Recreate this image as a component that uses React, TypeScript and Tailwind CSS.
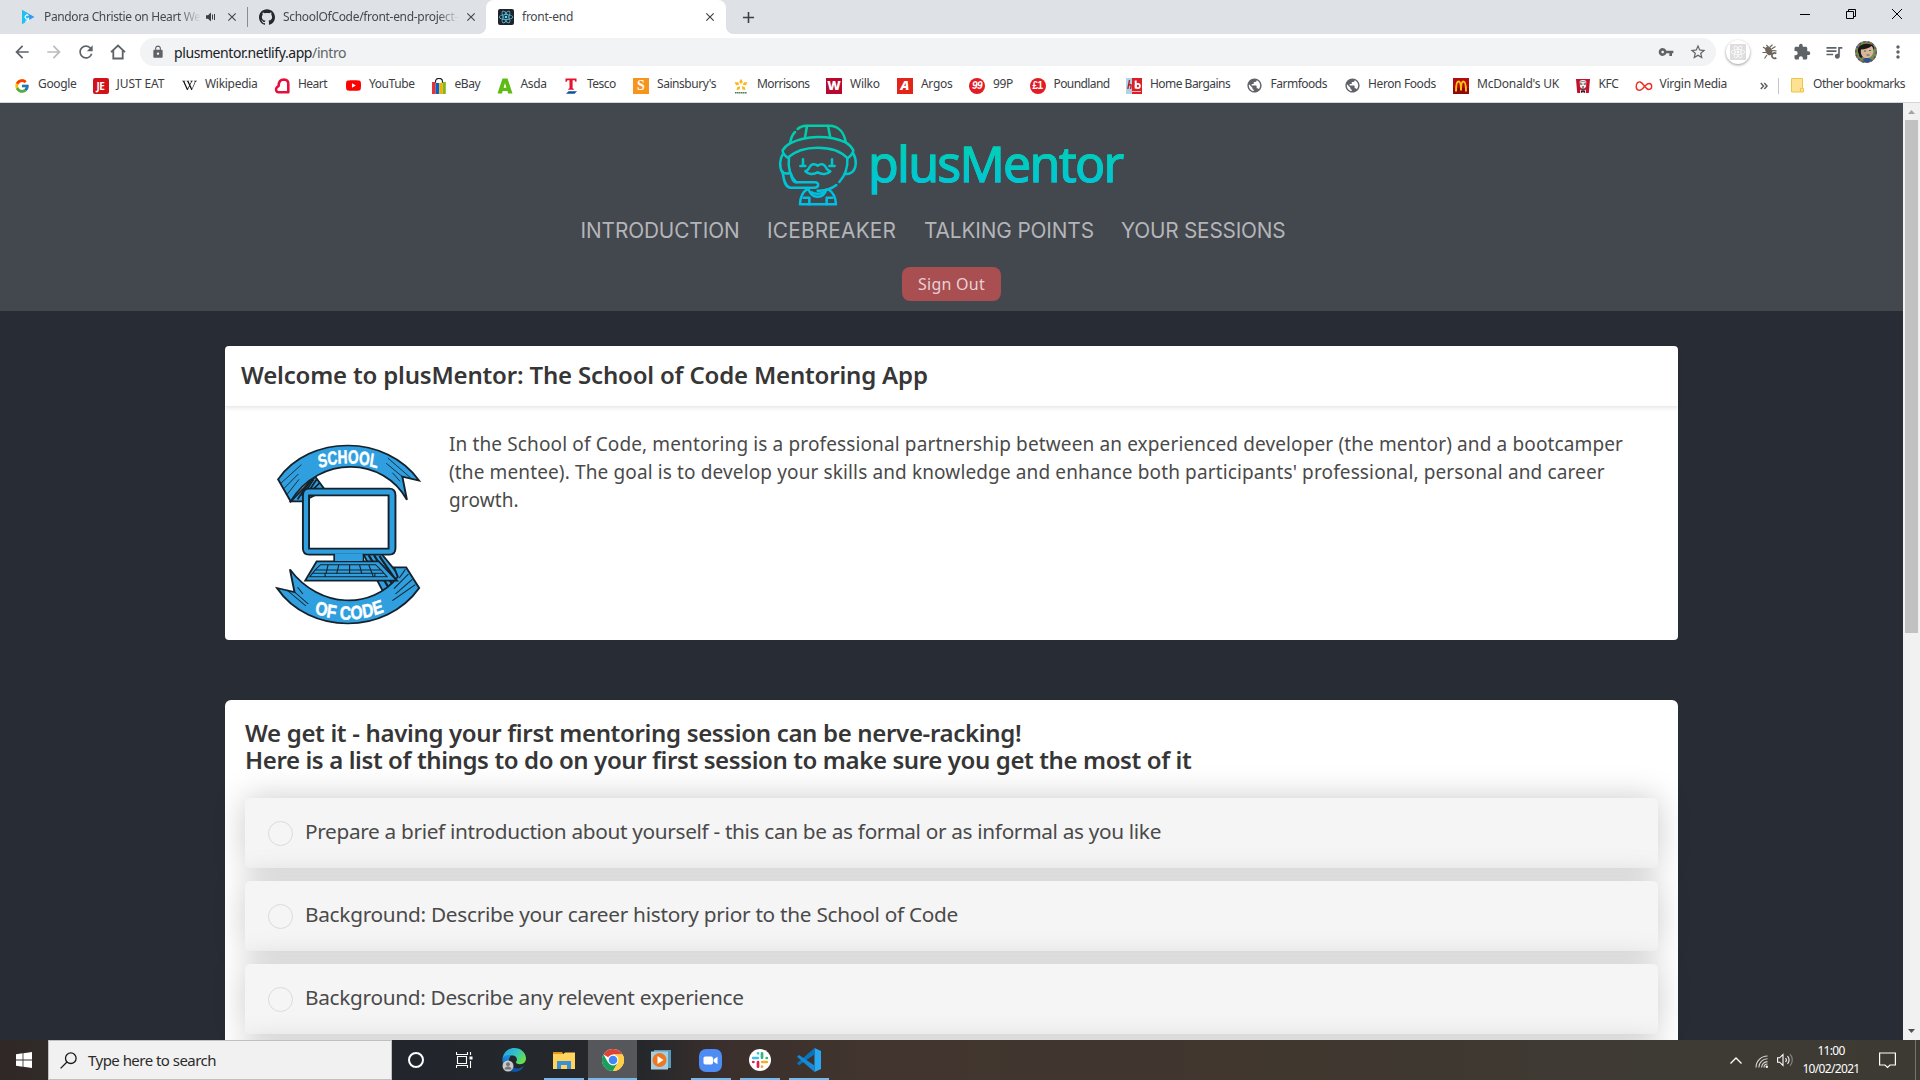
import React from 'react';
import type { ReactNode } from 'react';
import {
  MdArrowBack, MdArrowForward, MdRefresh, MdLock, MdVpnKey, MdStarBorder, MdExtension, MdQueueMusic,
  MdMoreVert, MdPublic, MdClose, MdAdd,
} from 'react-icons/md';
import { FcGoogle } from 'react-icons/fc';
import { SiGithub, SiWikipedia, SiYoutube, SiReact } from 'react-icons/si';

/* ---------- Bookmark icons ---------- */

function Tile({ className, children }: { className: string; children: ReactNode }) {
  return <span className={`flex h-4 w-4 items-center justify-center overflow-hidden leading-none ${className}`}>{children}</span>;
}

const HeartIcon = () => (
  <svg width="16" height="16" viewBox="0 0 16 16" fill="none" stroke="#e4103a" strokeWidth="2.6" strokeLinejoin="round">
    <path d="M14.300 14.300H4.600A2.900 2.900 0 0 1 3 9.200L4.600 8C4.600 4 6.800 1.600 10 1.500c2.800 0 4.500 1.800 4.300 4.600V14.300Z" />
  </svg>
);
const EbayIcon = () => (
  <svg width="16" height="16" viewBox="0 0 16 16">
    <path d="M4.500 5V3.500a3.300 3 0 0 1 7 0V5" fill="none" stroke="#222" strokeWidth="1.200" />
    <rect x="1" y="4" width="3.600" height="12" fill="#e53238" />
    <rect x="4.600" y="5" width="3.600" height="11" fill="#0064d2" />
    <rect x="8.200" y="5" width="3.400" height="11" fill="#f5af02" />
    <rect x="11.600" y="4" width="3.200" height="12" fill="#86b817" />
  </svg>
);
const AsdaIcon = () => (
  <svg width="16" height="16" viewBox="0 0 16 16">
    <path d="M5.500.5h5L15.500 15.500h-4.300l-.8-2.600H5.700l-.8 2.600H.5L5.500.5Zm2.500 4.500L6.600 9.800h2.800L8 5Z" fill="#5dbb14" fillRule="evenodd" />
  </svg>
);
const TescoIcon = () => (
  <svg width="16" height="16" viewBox="0 0 16 16">
    <path d="M2.500.5h11v3.200h-1.200l-.6-1.400H9.600v8l1.300.8v.7H5.200v-.7l1.300-.8v-8H4.400l-.6 1.400H2.500V.5Z" fill="#e8112d" />
    <path d="M5.500 13.300h8.500l-2.500 2.500H3l2.500-2.500Z" fill="#0a50a1" />
  </svg>
);
const MorrisonsIcon = () => (
  <svg width="16" height="16" viewBox="0 0 16 16">
    <g fill="#fbb61a">
      <path d="m8 .8 1.800 3L8 6.200 6.200 3.800Z" />
      <path d="m14.400 4.200-1.400 3-3.200-.4 1-2.600Z" />
      <path d="m1.600 4.200 1.400 3 3.200-.4-1-2.600Z" />
      <path d="m12.500 12-3-.6-.8-3.200 3 .8Z" />
      <path d="m3.500 12 3-.6.8-3.200-3 .8Z" />
    </g>
    <path d="M2 14.700h12" stroke="#4e7c5c" strokeWidth="1.500" strokeDasharray="1.500 .4" />
  </svg>
);
const McDonaldsIcon = () => (
  <svg width="16" height="16" viewBox="0 0 16 16">
    <rect width="16" height="16" fill="#b30c10" />
    <rect y="10" width="16" height="6" fill="#8f080c" />
    <path d="M3 13.500C3 7 4 3.500 5.600 3.500S8 7 8 12.500C8 7 8.800 3.500 10.400 3.500S13 7 13 13.500" fill="none" stroke="#ffc20e" strokeWidth="1.900" />
  </svg>
);
const KfcIcon = () => (
  <svg width="16" height="16" viewBox="0 0 16 16">
    <path d="M1 1h14l-1.200 14H2.200Z" fill="#c3112d" />
    <path d="M4.700 3.500C5 1.500 11 1.500 11.300 3.500L11 9 8 11.500 5 9Z" fill="#f4eeee" />
    <path d="M5 6h2.300M8.700 6H11M7 9h2M8 10v3" stroke="#222" strokeWidth="1" />
    <path d="M4.800 4.600C5.500 3 10.500 3 11.200 4.600" stroke="#777" strokeWidth=".8" fill="none" />
    <path d="M5 11.500 8 13l3-1.500V15H5Z" fill="#e6dede" />
    <path d="m6 12.500 2 .7 2-.7V15l-2-1-2 1Z" fill="#1b1b1b" />
  </svg>
);
const VirginIcon = () => (
  <svg width="18" height="16" viewBox="0 0 18 16" className="-mx-px shrink-0" fill="none" stroke="#ee2e24" strokeWidth="1.400">
    <path d="M9.500 8.500C7.500 11 6 12.600 4.300 12.300 2 12 1 10 1.300 7.500 1.600 5 3.200 3.500 5.200 4c2 .6 3.200 2.600 5 5 1.300 1.800 2.500 2.600 4 2.400 1.500-.2 2.500-1.300 2.500-3 0-1.600-1-2.800-2.500-2.900-1.800-.1-3 1.400-4.700 3Z" />
  </svg>
);
const HomeBargainsIcon = () => (
  <svg width="16" height="16" viewBox="0 0 16 16">
    <rect width="6" height="16" fill="#a9d8ee" />
    <rect x="6" width="10" height="16" fill="#dc1f26" />
    <path d="M3.500 2 1.800 11M2.500 8c1-2 3-2 2.600 0L4.500 11" fill="none" stroke="#c01d2b" strokeWidth="1.400" />
    <path d="M9.700 2.500V10.500" stroke="#fff" strokeWidth="2" />
    <circle cx="11.800" cy="8" r="2.100" fill="none" stroke="#fff" strokeWidth="1.800" />
    <path d="M1 13.500h14" stroke="#f0b4b6" strokeWidth="1" />
  </svg>
);

type Bookmark = { label: string; box: string; track: string; icon: ReactNode };
const bookmarks: Bookmark[] = [
  { label: 'Google', box: 'w-[78.5px]', track: 'tracking-[-0.33px]', icon: <FcGoogle size={16} /> },
  { label: 'JUST EAT', box: 'w-[88.5px]', track: 'tracking-[-0.08px]', icon: <Tile className="rounded-[2px] bg-[#d21118] font-['Open_Sans'] text-[10px] font-bold tracking-[-0.5px] text-white">JE</Tile> },
  { label: 'Wikipedia', box: 'w-[93px]', track: 'tracking-[-0.29px]', icon: <SiWikipedia size={15} color="#111" /> },
  { label: 'Heart', box: 'w-[71px]', track: 'tracking-[-0.53px]', icon: <HeartIcon /> },
  { label: 'YouTube', box: 'w-[85.5px]', track: 'tracking-[-0.43px]', icon: <SiYoutube size={15} color="#f00" /> },
  { label: 'eBay', box: 'w-[66px]', track: 'tracking-[-0.4px]', icon: <EbayIcon /> },
  { label: 'Asda', box: 'w-[66.5px]', track: 'tracking-[-0.35px]', icon: <AsdaIcon /> },
  { label: 'Tesco', box: 'w-[70px]', track: 'tracking-[-0.5px]', icon: <TescoIcon /> },
  { label: "Sainsbury's", box: 'w-[100px]', track: 'tracking-[-0.46px]', icon: <Tile className="bg-[#f7941d] font-['Liberation_Serif'] text-[14px] font-bold text-white">S</Tile> },
  { label: 'Morrisons', box: 'w-[93px]', track: 'tracking-[-0.53px]', icon: <MorrisonsIcon /> },
  { label: 'Wilko', box: 'w-[71px]', track: 'tracking-[-0.25px]', icon: <Tile className="bg-[#b9072f] font-['Open_Sans'] text-[13px] font-extrabold text-white">W</Tile> },
  { label: 'Argos', box: 'w-[72px]', track: 'tracking-[-0.3px]', icon: <Tile className="bg-[#e1251b] font-['Open_Sans'] text-[13px] font-extrabold text-white italic">A</Tile> },
  { label: '99P', box: 'w-[60.5px]', track: 'tracking-[-0.35px]', icon: <Tile className="rounded-full bg-[#e31b23] font-['Liberation_Sans'] text-[10px] font-bold tracking-[-0.5px] text-white italic">99</Tile> },
  { label: 'Poundland', box: 'w-[96.5px]', track: 'tracking-[-0.59px]', icon: <Tile className="rounded-full bg-[#e31b23] font-['Liberation_Sans'] text-[10px] font-bold tracking-[-0.5px] text-white">£1</Tile> },
  { label: 'Home Bargains', box: 'w-[120.5px]', track: 'tracking-[-0.53px]', icon: <HomeBargainsIcon /> },
  { label: 'Farmfoods', box: 'w-[97.5px]', track: 'tracking-[-0.5px]', icon: <MdPublic size={17} color="#5f6368" className="shrink-0" /> },
  { label: 'Heron Foods', box: 'w-[109px]', track: 'tracking-[-0.38px]', icon: <MdPublic size={17} color="#5f6368" className="shrink-0" /> },
  { label: "McDonald's UK", box: 'w-[121.5px]', track: 'tracking-[-0.21px]', icon: <McDonaldsIcon /> },
  { label: 'KFC', box: 'w-[61px]', track: 'tracking-[-0.5px]', icon: <KfcIcon /> },
  { label: 'Virgin Media', box: 'w-[124.5px]', track: 'tracking-[-0.29px]', icon: <VirginIcon /> },
];

/* ---------- Browser chrome ---------- */

function TabBar() {
  return (
    <div className="flex h-[34px] items-center bg-[#dee1e6] text-[12px] text-[#45494d]">
      <div className="flex w-[247px] items-center pl-[21px]">
        <svg width="14" height="14" viewBox="0 0 14 14">
          <path d="M1 0 13.500 7 1 14Z" fill="#2f9cf4" />
          <path d="M1 0 7 3.500V10.500L1 14Z" fill="#1fc0f5" />
          <path d="M7.500 5.500a2 2 0 1 0 0 3v1.500a2 2 0 0 1-3 .8" stroke="#fff" strokeWidth="1.200" fill="none" />
        </svg>
        <span className="ml-[9px] w-[160px] tracking-[-0.37px] whitespace-nowrap [mask-image:linear-gradient(90deg,#000_84%,transparent_98%)]">Pandora Christie on Heart We</span>
        <svg width="11" height="10" viewBox="0 0 11 10" className="ml-[2px]">
          <path d="M0 3.200h2L5 .5v9L2 6.800H0Z" fill="#3c4043" />
          <path d="M6.500 2.500v5M8.500 2v6" stroke="#3c4043" strokeWidth="1" />
        </svg>
        <MdClose size={14} color="#45494d" className="ml-[8px]" />
      </div>
      <div className="h-5 w-px bg-[#8a8d91]" />
      <div className="flex w-[238px] items-center pl-[11px]">
        <SiGithub size={16} color="#24292e" />
        <span className="ml-2 w-[176px] tracking-[-0.31px] whitespace-nowrap [mask-image:linear-gradient(90deg,#000_88%,transparent)]">SchoolOfCode/front-end-project-</span>
        <MdClose size={14} color="#45494d" className="ml-[5px]" />
      </div>
      <div className="relative flex h-[34px] w-[240px] items-center rounded-t-lg bg-white pl-[12px]">
        <span className="absolute bottom-0 -left-2 h-2 w-2 bg-[radial-gradient(circle_at_0_0,transparent_8px,#fff_8px)]" />
        <span className="absolute -right-2 bottom-0 h-2 w-2 bg-[radial-gradient(circle_at_100%_0,transparent_8px,#fff_8px)]" />
        <Tile className="rounded-[2px] bg-[#20232a]"><SiReact size={14} color="#61dafb" /></Tile>
        <span className="ml-2 w-[181px] tracking-[-0.25px]">front-end</span>
        <MdClose size={14} color="#3c4043" />
      </div>
      <MdAdd size={19} color="#3c4043" className="ml-[13px]" />
      <svg width="104" height="12" viewBox="0 0 104 12" className="mt-[-6px] mr-[17px] ml-auto" fill="none" stroke="#000" strokeWidth="1">
        <path d="M1 6.500h10M47.500 3.500h7v7h-7ZM49.500 3.500v-2h7v7h-2M93 1l10 10M103 1 93 11" />
      </svg>
    </div>
  );
}

function Slot({ children }: { children: ReactNode }) {
  return <div className="flex h-8 w-8 items-center justify-center">{children}</div>;
}

function AddressBar() {
  return (
    <div className="flex h-9 items-center pl-[6px] text-[#5f6368]">
      <Slot><MdArrowBack size={20} /></Slot>
      <Slot><MdArrowForward size={20} color="#babcbe" /></Slot>
      <Slot><MdRefresh size={20} /></Slot>
      <Slot>
        <svg width="16" height="16" viewBox="0 0 16 16" fill="none" stroke="#5f6368" strokeWidth="1.800"><path d="M1 8.200 8 1.500l7 6.700M3.300 6.500V14.500h9.400V6.500" /></svg>
      </Slot>
      <div className="ml-[6px] flex h-7 w-[1576px] items-center rounded-full bg-[#f1f3f4] pl-[11px]">
        <MdLock size={14} />
        <span className="ml-[9px] text-[14px] tracking-[-0.41px] text-[#202124]">plusmentor.netlify.app<span className="text-[#5f6368]">/intro</span></span>
        <MdVpnKey size={16} className="mr-[15px] ml-auto" />
        <MdStarBorder size={18} className="mr-[9px]" />
      </div>
      <div className="ml-[6px] flex">
        <Slot>
          <span className="flex h-6 w-6 items-center justify-center rounded-full bg-white shadow-[0_1px_3px_rgba(0,0,0,0.4)]">
            <span className="flex h-4 w-4 items-center justify-center bg-[#dedede]"><SiReact size={14} color="#fff" /></span>
          </span>
        </Slot>
        <Slot>
          <svg width="16" height="16" viewBox="0 0 16 16" fill="none" stroke="#6d655b" strokeWidth="1.200">
            <ellipse cx="6.800" cy="6.800" rx="2.600" ry="4" fill="#6d655b" transform="rotate(-25 6.800 6.800)" />
            <path d="M4 5 1 3M4 8.500H.5M5 11l-2.500 3.500M9.500 5l4-2.500M6 3 4.500.8M8 3 10.500.8M9.500 6.500l5 .3" />
            <path d="M14.300 9.500a2.700 2.700 0 1 0 0 4.300" strokeWidth="1.700" />
          </svg>
        </Slot>
        <Slot><MdExtension size={18} /></Slot>
        <Slot><MdQueueMusic size={20} /></Slot>
        <Slot>
          <svg width="22" height="22" viewBox="0 0 22 22">
            <circle cx="11" cy="11" r="11" fill="#6f8f4a" />
            <circle cx="11" cy="11" r="10.200" fill="none" stroke="#3a4fb0" strokeWidth="1.600" strokeDasharray="2 2.500" />
            <circle cx="11" cy="11" r="10.200" fill="none" stroke="#c7493a" strokeWidth="1.600" strokeDasharray="1.500 5" />
            <path d="M3 8C4 2 17 1 19 6c.5 2-.5 3-1 4L6 17 4 15C5 13 2 12 3 8Z" fill="#1f1715" />
            <path d="M6 8.500c4 0 8-1.500 10.500-3.500 3 2.500 2.500 8-.5 10.500-2.500 2-6.500 2-8.500 0C6 13.800 5.500 11 6 8.500Z" fill="#d9b59a" />
            <path d="M9 10h2M14 9.500h2M11.500 14h3" stroke="#3f6a55" strokeWidth="1.200" />
            <path d="M8 18c2-1.500 6-1.500 8 0l-1 3H9Z" fill="#34508e" />
          </svg>
        </Slot>
        <Slot><MdMoreVert size={20} /></Slot>
      </div>
    </div>
  );
}

function BookmarkBar() {
  return (
    <div className="flex h-[33px] items-center border-b border-[#d3d6da] pb-px pl-[14px] text-[12px] text-[#3c4043]">
      {bookmarks.map((b) => (
        <div key={b.label} className={`flex shrink-0 items-center ${b.box}`}>
          <span className="mr-2 flex h-4 w-4 shrink-0 items-center justify-center">{b.icon}</span>
          <span className={`mb-[3px] whitespace-nowrap ${b.track}`}>{b.label}</span>
        </div>
      ))}
      <svg width="8" height="8" viewBox="0 0 8 8" fill="none" stroke="#5f6368" strokeWidth="1.500"><path d="m.8 1 2.700 3L.8 7M4.300 1 7 4 4.300 7" /></svg>
      <div className="ml-[10px] h-4 w-px bg-[#c4c6c9]" />
      <svg width="13" height="15" viewBox="0 0 13 15" className="ml-[12px] shrink-0">
        <path d="M.5.5h11v10h1v3.500H.5Z" fill="#fde293" stroke="#eec644" />
        <path d="M9.500 14v-3.500h2" fill="none" stroke="#eec644" />
      </svg>
      <span className="mb-[3px] ml-[9px] tracking-[-0.49px] whitespace-nowrap">Other bookmarks</span>
    </div>
  );
}

/* ---------- Logos ---------- */

function MentorLogo() {
  return (
    <svg width="80" height="84" viewBox="55 40 240 252" fill="none" stroke="url(#mentor)" strokeWidth="7.500" strokeLinecap="round" strokeLinejoin="round">
      <defs>
        <linearGradient id="mentor" gradientUnits="userSpaceOnUse" x1="0" y1="45" x2="0" y2="288">
          <stop offset="0" stopColor="#00cfa8" />
          <stop offset="1" stopColor="#00bfe8" />
        </linearGradient>
      </defs>
      <path d="M114 58C122 50 130 48 140 48H208C238 48 254 70 258 98" />
      <path d="M106 67C97 76 93 88 91 101" />
      <path d="M142 49 136 84M205 49 212 84" />
      <path d="M91 101C140 76 208 76 258 98C268 104 276 112 281 122C281 132 274 138 264 146C244 124 212 114 174 114C136 114 106 124 84 144C75 138 69 132 69 122C74 112 82 106 91 101Z" />
      <path d="M88 144C84 176 92 200 110 218" />
      <path d="M263 146C265 178 256 198 239 217" />
      <path d="M230 226C212 240 190 244 174 243" />
      <path d="M70 133C60 146 58 172 68 188C76 192 84 192 90 190" />
      <path d="M280 130C292 150 291 178 276 188C268 193 262 194 256 193" />
      <path d="M69 186C72 212 76 232 92 234H164C178 234 180 218 166 218H110C100 218 96 208 94 194" />
      <path d="M130 149V169H122M130 169H137M217 149V169H209M217 169H225" />
      <path d="M174 168C164 160 154 164 150 172C146 180 142 184 137 185C144 194 162 196 174 188C186 196 204 194 212 185C206 184 202 180 198 172C194 164 184 160 174 168Z" />
      <path d="M141 240C128 248 122 262 121 284H229C228 262 220 248 208 240M147 240C156 268 192 268 200 240" />
      <path d="M156 248C164 254 184 254 192 248M132 264H149V284M218 264H201V284" />
    </svg>
  );
}

function SchoolLogo() {
  return (
    <svg width="148" height="183" viewBox="145 311 387 549" preserveAspectRatio="none" stroke="#16222b" strokeWidth="5" strokeLinejoin="miter" fill="#2f9fdf">
      <defs>
        <path id="arc-top" d="M413 387Q532 357 658 388" />
        <path id="arc-bottom" d="M344 820Q468 866 614 812" />
      </defs>
      <path d="M186 486 250 412 276 452 218 486Z" />
      <path d="M204 480 236 426M216 470 246 420M228 464 254 420M240 456 262 430" />
      <path d="M153 420C236 284 436 284 522 424L478 412 490 482C430 354 262 344 186 486Z" />
      <path d="M160 432 214 376M168 448 206 404M176 466 208 420" strokeWidth="2.500" />
      <path d="M478 412 436 372M472 426 452 400M500 416 440 356" strokeWidth="2.500" />
      <path d="M376 644H424L494 742 430 762Z" />
      <path d="M390 648 446 752M404 648 458 746M418 650 470 738" strokeWidth="6" />
      <path d="M150 746C236 890 436 886 522 746L488 684H456L466 712C400 810 262 810 184 690L196 758Z" />
      <path d="M486 690 470 716M494 704 456 748M504 720 460 764M512 736 452 784M196 758 232 794M204 744 218 764M176 752 226 800" strokeWidth="2.800" />
      <path d="M300 640H376V672H300Z" />
      <path d="M254 666H416L464 724H224Z" />
      <path fillRule="evenodd" d="M234 448H444Q460 448 460 468V626Q460 646 444 646H234Q218 646 218 626V468Q218 448 234 448ZM234 468V628H442V468Z" />
      <rect x="302" y="643" width="72" height="22" stroke="none" />
      <path d="M264 676H408L422 692H250ZM250 692H422L438 712H236ZM284 676 278 704M312 676 306 704M340 676V704M366 676 372 704M390 676 402 712M244 702H430M276 702V712M406 702V712" strokeWidth="3" fill="none" />
      <g fill="#fff" stroke="#fff" strokeWidth="1.500" fontFamily="'Liberation Sans'" fontWeight="700" fontSize="57">
        <text transform="scale(.63 1)"><textPath href="#arc-top">SCHOOL</textPath></text>
        <text transform="scale(.72 1)"><textPath href="#arc-bottom">OF CODE</textPath></text>
      </g>
    </svg>
  );
}

/* ---------- Page ---------- */

const steps = [
  { text: 'Prepare a brief introduction about yourself - this can be as formal or as informal as you like', track: 'tracking-[-0.336px]' },
  { text: 'Background: Describe your career history prior to the School of Code', track: 'tracking-[-0.28px]' },
  { text: 'Background: Describe any relevent experience', track: 'tracking-[-0.31px]' },
];

function Page() {
  return (
    <div className="h-[937px] w-[1903px] overflow-hidden bg-[#282c34]">
      <header className="h-[208px] bg-[#43474e] pt-[20px]">
        <div className="flex h-[84px] items-start pl-[778px]">
          <MentorLogo />
          <span className="mt-[6px] ml-[10px] bg-[linear-gradient(180deg,#00d0b0_30%,#00c2e0_85%)] bg-clip-text pr-1 text-[50px] leading-[68px] tracking-[-1.75px] text-transparent [-webkit-text-stroke:0.9px_#00cbc6]">plusMentor</span>
        </div>
        <nav className="mt-[10px] flex h-7 pl-[580.5px] font-['Inter'] text-[20.8px] leading-7 whitespace-nowrap text-[#b4b5b8]">
          <span className="w-[186.5px] tracking-[-0.1px]">INTRODUCTION</span>
          <span className="w-[157px] tracking-[0.22px]">ICEBREAKER</span>
          <span className="w-[197px] tracking-[-0.12px]">TALKING POINTS</span>
          <span className="tracking-[-0.21px]">YOUR SESSIONS</span>
        </nav>
        <div className="mt-[22px] flex justify-center">
          <button className="h-[34px] w-[99px] rounded-lg bg-[#a94e51] pb-px text-[16px] tracking-[0.25px] text-[#e6d2d4]">Sign Out</button>
        </div>
      </header>

      <section className="mt-[35px] ml-[225px] h-[294px] w-[1453px] rounded-[4px] bg-white text-[#363636]">
        <h1 className="h-[60px] pt-[13px] pl-4 text-[24px] leading-8 font-semibold tracking-[-0.18px] shadow-[0_2px_4px_rgba(10,10,10,0.1)]">Welcome to plusMentor: The School of Code Mentoring App</h1>
        <div className="flex pl-[50px]">
          <div className="mt-[37px]"><SchoolLogo /></div>
          <p className="mt-[24px] ml-[26px] text-[19px] leading-7 tracking-[0.127px] whitespace-nowrap text-[#4a4a4a]">
            In the School of Code, mentoring is a professional partnership between an experienced developer (the mentor) and a bootcamper<br />
            (the mentee). The goal is to develop your skills and knowledge and enhance both participants' professional, personal and career<br />
            growth.
          </p>
        </div>
      </section>

      <section className="mt-[60px] ml-[225px] w-[1453px] rounded-[6px] bg-white px-5 pt-[19px] text-[#4a4a4a]">
        <h2 className="h-[79px] text-[24px] leading-[27px] font-semibold text-[#363636]">
          <span className="tracking-[-0.33px]">We get it - having your first mentoring session can be nerve-racking!</span><br />
          <span className="tracking-[-0.39px]">Here is a list of things to do on your first session to make sure you get the most of it</span>
        </h2>
        <ul className="flex flex-col gap-[13px]">
          {steps.map((s) => (
            <li key={s.text} className="flex h-[70px] items-center rounded-[5px] bg-[#f5f5f5] pl-[23px] shadow-[0_0_32px_rgba(0,0,0,0.21)]">
              <span className="h-[25px] w-[25px] rounded-full border border-[#dbdbdb]" />
              <span className={`mb-[2px] ml-[12px] text-[20.8px] ${s.track}`}>{s.text}</span>
            </li>
          ))}
          <li className="h-[70px] rounded-[5px] bg-[#f5f5f5] shadow-[0_0_32px_rgba(0,0,0,0.21)]" />
        </ul>
      </section>
    </div>
  );
}

function Scrollbar() {
  return (
    <div className="flex h-[937px] w-[17px] flex-col items-center bg-[#f1f1f1]">
      <svg width="17" height="17" viewBox="0 0 17 17"><path d="M5 11h7L8.500 7Z" fill="#a3a3a3" /></svg>
      <div className="h-[513px] w-[13px] bg-[#c1c1c1]" />
      <svg width="17" height="17" viewBox="0 0 17 17" className="mt-auto"><path d="M5 6h7L8.500 10Z" fill="#505050" /></svg>
    </div>
  );
}

/* ---------- Taskbar ---------- */

function Task({ children, open, active }: { children: ReactNode; open?: boolean; active?: boolean }) {
  return (
    <div className={`flex h-10 w-[49px] flex-col items-center ${active ? 'bg-[#55575b]' : ''}`}>
      <div className="flex h-[38px] items-center pt-[2px]">{children}</div>
      {(open || active) && <div className={`h-[2px] bg-[#76b9ed] ${active ? 'w-full' : 'w-10'}`} />}
    </div>
  );
}

const EdgeIcon = () => (
  <svg width="24" height="24" viewBox="0 0 24 24" className="-ml-px">
    <defs>
      <linearGradient id="edge-a" x1="0" y1="0" x2="1" y2=".5"><stop stopColor="#1f9fe6" /><stop offset=".6" stopColor="#35c4c4" /><stop offset="1" stopColor="#63e04d" /></linearGradient>
      <linearGradient id="edge-b" x1="0" y1="0" x2="0" y2="1"><stop stopColor="#1e8fe0" /><stop offset="1" stopColor="#0b4f9e" /></linearGradient>
    </defs>
    <path d="M.5 10C2 3.500 7 0 12.500 0 19 0 24 5 24 10.500c0 3.500-2.500 5.700-6 5.700-3.500 0-4.500-1.500-3.800-2.500 1.500-2 .8-6.200-4.200-6.200C5 7.500 2 9 .5 10Z" fill="url(#edge-a)" />
    <path d="M.5 10C3 7 6.500 6.500 9 7.500c-3 3-3 9 1.500 11.700 4 2.500 8.500 1.300 11.500-1.200C19.500 22.500 16 24 12 24 5 24-.5 18 .5 10Z" fill="url(#edge-b)" />
    <circle cx="6" cy="18" r="5.500" fill="#c9c9c9" />
    <circle cx="6" cy="16.300" r="2" fill="#757575" />
    <path d="M2.500 21.500c0-4 7-4 7 0Z" fill="#757575" />
  </svg>
);

function Taskbar() {
  return (
    <div className="flex h-10 items-center bg-[linear-gradient(90deg,#302827_0px,#302a29_48px,#22262c_400px,#25272b_640px,#3a2f2c_720px,#42352f_880px,#40372f_1300px,#3e3b35_1700px,#3d3a34_1920px)]">
      <div className="flex w-[48px] justify-center">
        <svg width="16" height="16" viewBox="0 0 16 16" fill="#fff"><path d="M0 2.200 6.600 1.300V7.600H0ZM7.400 1.200 16 0V7.600H7.400ZM0 8.400H6.600V14.700L0 13.800ZM7.400 8.400H16V16L7.400 14.800Z" /></svg>
      </div>
      <div className="flex h-10 w-[344px] items-center border border-[#c0c0c0] bg-[#f1f1f1] pl-[11px] text-[15px] tracking-[-0.53px] text-[#2b2b2b]">
        <svg width="17" height="17" viewBox="0 0 17 17" fill="none" stroke="#1a1a1a" strokeWidth="1.300"><circle cx="10.800" cy="6.200" r="5.300" /><path d="M7 10 .6 16.400" /></svg>
        <span className="ml-[11px]">Type here to search</span>
      </div>
      <Task><span className="mr-[2px] block h-4 w-4 rounded-full border-2 border-white" /></Task>
      <Task>
        <svg width="17" height="16" viewBox="0 0 17 16" fill="none" stroke="#fff" strokeWidth="1.100" className="-ml-[3px]"><path d="M1.500 4.500h9v7h-9ZM.5 0v2.500h11V0M.5 16v-2.500h11V16M14.500 0v3M14.500 9v7" /><rect x="13.500" y="4.500" width="3" height="3" fill="#fff" stroke="none" /></svg>
      </Task>
      <Task><EdgeIcon /></Task>
      <Task open>
        <svg width="22" height="19" viewBox="0 0 22 19"><path d="M0 1h9l1.500 2H0Z" fill="#e09a12" /><path d="M0 3h10.500l1.500-1.500h10V18H0Z" fill="#ffd35c" /><path d="M4 18V10h14v8h-4v-4H8v4Z" fill="#3b8fd6" /></svg>
      </Task>
      <Task active>
        <svg width="22" height="22" viewBox="0 0 22 22">
          <circle cx="11" cy="11" r="11" fill="#fff" />
          <path d="M11 11 1.470 5.500A11 11 0 0 1 20.530 5.500H11Z" fill="#db4437" />
          <path d="M1.470 5.500A11 11 0 0 0 11 22L15.760 13.750 11 11 6.240 13.750Z" fill="#1a9f59" />
          <path d="M20.530 5.500A11 11 0 0 1 11 22L15.760 13.750 11 5.500Z" fill="#ffce42" />
          <circle cx="11" cy="11" r="5.400" fill="#fff" /><circle cx="11" cy="11" r="4.300" fill="#4486f4" />
        </svg>
      </Task>
      <Task>
        <svg width="20" height="20" viewBox="0 0 20 20" className="mr-px"><rect x="3" y="0" width="17" height="18" fill="#5c9ab9" /><rect x="0" y="1.500" width="17" height="18" fill="#a4cfe2" /><circle cx="8.500" cy="10" r="7" fill="#ee7722" /><path d="M6.500 6v8l6-4Z" fill="#fff" /></svg>
      </Task>
      <Task open>
        <svg width="23" height="23" viewBox="0 0 23 23"><rect width="23" height="23" rx="7" fill="#4d8cf5" /><rect x="4.500" y="7.500" width="9.500" height="8" rx="1.800" fill="#fff" /><path d="M14.600 10.300 18.500 7.700v7.600l-3.900-2.600Z" fill="#fff" /></svg>
      </Task>
      <Task open>
        <svg width="22" height="22" viewBox="0 0 22 22">
          <circle cx="11" cy="11" r="11" fill="#fff" />
          <g strokeWidth="2.700" strokeLinecap="round">
            <path d="M4.200 9h4.600M9 4.300h.1" stroke="#36c5f0" />
            <path d="M13 4.300v4.500M17.700 9h.1" stroke="#2eb67d" />
            <path d="M13.200 13h4.600M13 17.700h.1" stroke="#ecb22e" />
            <path d="M9 13.200v4.500M4.300 13h.1" stroke="#e01e5a" />
          </g>
        </svg>
      </Task>
      <Task open>
        <svg width="24" height="24" viewBox="0 0 24 24"><path d="M17.500 0 24 3V21L17.500 24Z" fill="#2aa7f2" /><path d="M0 15.200 17.500 0V6.500L2 17.200Z" fill="#0a74bf" /><path d="M0 8.800 2 6.900 17.500 17.500V24Z" fill="#158ad6" /></svg>
      </Task>
      <div className="ml-auto flex h-10 items-center text-white">
        <svg width="12" height="7" viewBox="0 0 12 7" fill="none" stroke="#fff" strokeWidth="1.300"><path d="m.5 6.500 5.500-5.500 5.500 5.500" /></svg>
        <svg width="13" height="13" viewBox="0 0 13 13" fill="none" stroke="#d8d6d4" strokeWidth="1.100" className="mt-[2px] ml-[13px]"><path d="M1 12.500A11.500 11.500 0 0 1 12.500 1M3.800 12.500A8.700 8.700 0 0 1 12.500 3.800M6.600 12.500A5.900 5.900 0 0 1 12.500 6.600M9 12.500a3.500 3.500 0 0 1 3.500-3.500" /><circle cx="11.800" cy="11.800" r="1.200" fill="#fff" stroke="none" /></svg>
        <svg width="17" height="14" viewBox="0 0 17 14" fill="none" stroke="#fff" strokeWidth="1.100" className="ml-[9px]"><path d="M.6 4.800h2L6 1.600v10.800L2.600 9.200h-2ZM8.500 5a3 3 0 0 1 0 4M10.500 3.200a5.300 5.300 0 0 1 0 7.600" /><path d="M13 1.200a8.500 8.500 0 0 1 0 11.600" stroke="#8a8782" /></svg>
        <div className="ml-[6px] flex w-[62px] flex-col items-center text-[12px] leading-[18px]">
          <span className="tracking-[-0.72px]">11:00</span>
          <span className="tracking-[-0.67px]">10/02/2021</span>
        </div>
        <svg width="17" height="17" viewBox="0 0 17 17" fill="none" stroke="#fff" strokeWidth="1.200" className="ml-[17px]"><path d="M.6 1h15.800v12H11l-2.500 2.500L6 13H.6Z" /></svg>
        <div className="mr-1 ml-[19px] h-10 w-px bg-[#77746f]" />
      </div>
    </div>
  );
}

export default function App() {
  return (
    <div className="h-[1080px] w-[1920px] overflow-hidden bg-white font-['Noto_Sans',sans-serif]">
      <TabBar />
      <AddressBar />
      <BookmarkBar />
      <div className="flex">
        <Page />
        <Scrollbar />
      </div>
      <Taskbar />
    </div>
  );
}
